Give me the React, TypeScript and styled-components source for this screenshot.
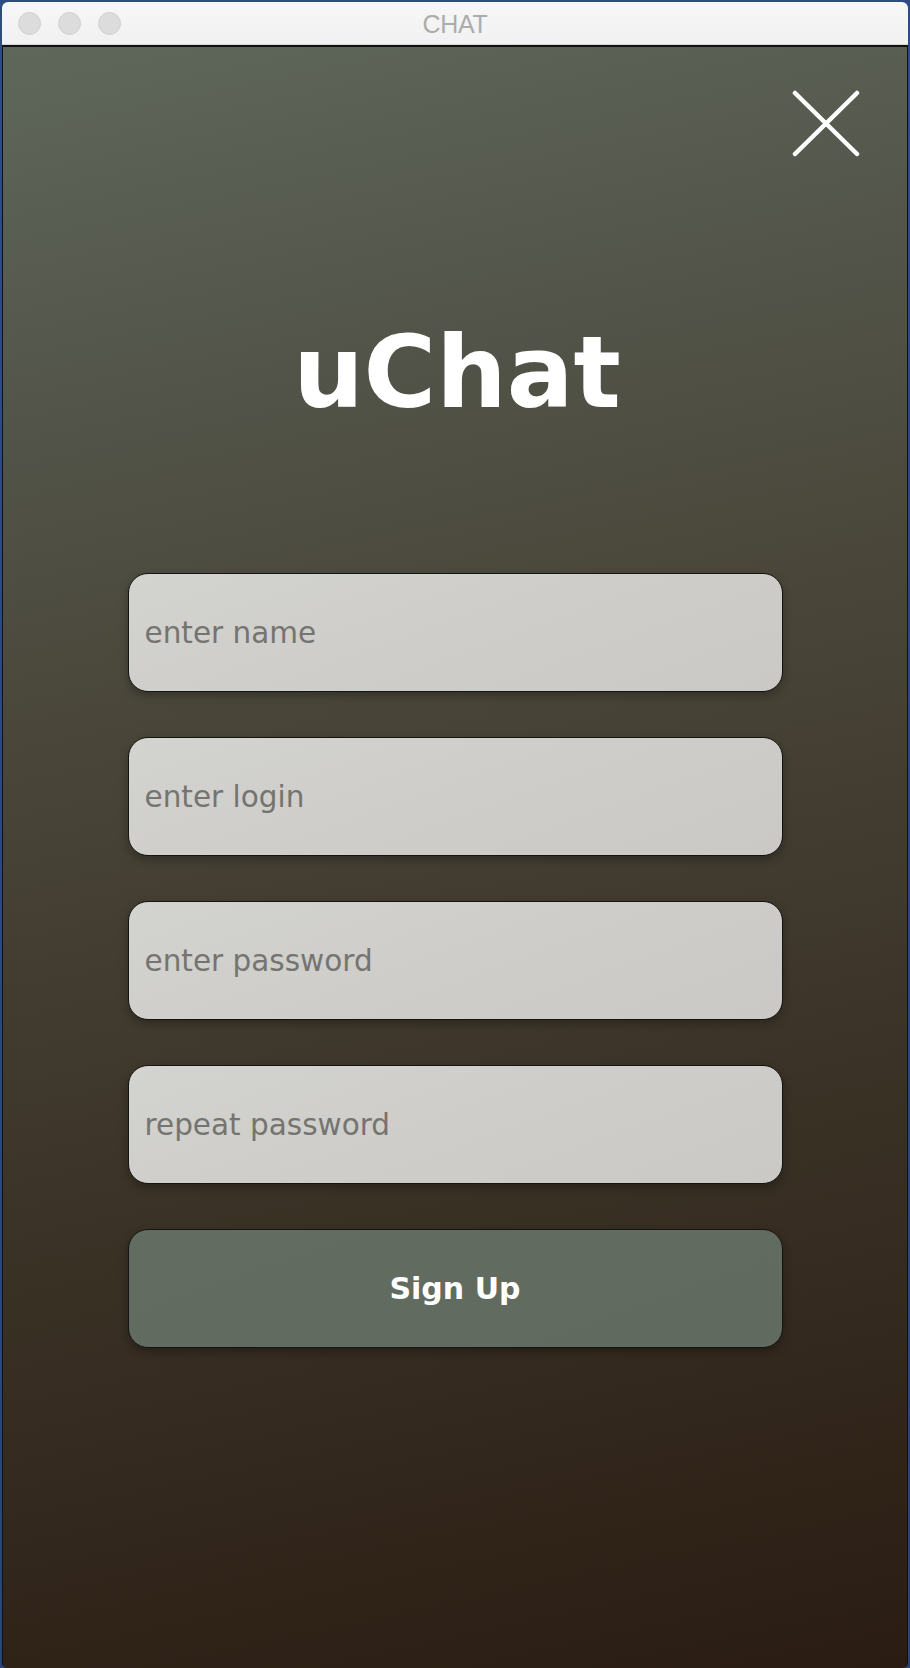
import React from "react";
import styled, { createGlobalStyle } from "styled-components";

const Global = createGlobalStyle`
  html, body {
    margin: 0;
    padding: 0;
    background: #2e4a82;
  }
  #root {
    width: 910px;
    height: 1668px;
  }
  * { box-sizing: border-box; }
`;

const Desktop = styled.div`
  width: 910px;
  height: 1668px;
  padding: 2px 2px 0 2px;
  background: linear-gradient(180deg, #2f4b84 0%, #2a4578 100%);
  display: flex;
`;

const Window = styled.div`
  flex: 1;
  display: flex;
  flex-direction: column;
  border-radius: 6px 6px 5px 5px;
  overflow: hidden;
`;

const TitleBar = styled.div`
  position: relative;
  height: 43px;
  flex: none;
  background: linear-gradient(180deg, #f7f7f7 0%, #f1f1f1 100%);
  border-bottom: 1px solid #d6d6d6;
  display: flex;
  align-items: center;
  justify-content: center;
  padding: 2px 16px 0 16px;
`;

const Lights = styled.div`
  position: absolute;
  left: 16px;
  top: 10px;
  display: flex;
  gap: 17px;
`;

const Light = styled.span`
  width: 23px;
  height: 23px;
  border-radius: 50%;
  background: #dcdcdc;
  border: 1px solid #d0d0d0;
`;

const WindowTitle = styled.div`
  font-family: "Liberation Sans", Arial, sans-serif;
  font-size: 25px;
  color: #acacac;
  letter-spacing: -0.3px;
  margin-left: 0;
`;

const Content = styled.div`
  flex: 1;
  display: flex;
  flex-direction: column;
  align-items: center;
  border-top: 2px solid #111;
  border-left: 1px solid #111;
  border-right: 1px solid #111;
  background: linear-gradient(
    168deg,
    #5f675b 0%,
    #53554a 20%,
    #4a473a 38%,
    #3d3529 62%,
    #33281d 82%,
    #2a1c12 100%
  );
`;

const Header = styled.div`
  align-self: stretch;
  display: flex;
  justify-content: flex-end;
  padding: 43px 47px 0 0;
`;

const CloseButton = styled.button`
  background: none;
  border: none;
  padding: 0;
  cursor: pointer;
  display: flex;
`;

const Title = styled.h1`
  margin: 166px 0 0 0;
  font-family: "DejaVu Sans", Verdana, sans-serif;
  font-weight: bold;
  font-size: 99px;
  line-height: 99px;
  color: #ffffff;
  padding-left: 4px;
`;

const Form = styled.form`
  margin-top: 151px;
  display: flex;
  flex-direction: column;
  gap: 45px;
  width: 655px;
`;

const Field = styled.input`
  height: 119px;
  width: 100%;
  border: 1.5px solid #141414;
  border-radius: 20px;
  background: linear-gradient(160deg, #d3d3cf 0%, #cecdca 50%, #cac9c5 100%);
  box-shadow: 0 4px 10px rgba(0, 0, 0, 0.28);
  padding: 0 16px;
  font-family: "DejaVu Sans", Verdana, sans-serif;
  font-size: 29.5px;
  color: #555;
  outline: none;
  &::placeholder {
    color: #747471;
  }
`;

const Submit = styled.button`
  height: 119px;
  width: 100%;
  border: 1.5px solid #141414;
  border-radius: 20px;
  background: linear-gradient(160deg, #636c60 0%, #616a5e 100%);
  box-shadow: 0 4px 10px rgba(0, 0, 0, 0.3);
  font-family: "DejaVu Sans", Verdana, sans-serif;
  font-weight: bold;
  font-size: 30px;
  color: #ffffff;
  cursor: pointer;
`;

const CloseIcon = () => (
  <svg width="68" height="67" viewBox="0 0 68 67">
    <path
      d="M3 3 L65 64 M65 3 L3 64"
      stroke="#ffffff"
      strokeWidth="4.5"
      strokeLinecap="round"
      fill="none"
    />
  </svg>
);

export default function App() {
  const fields = ["enter name", "enter login", "enter password", "repeat password"];
  return (
    <>
      <Global />
      <Desktop>
        <Window>
          <TitleBar>
            <Lights>
              <Light />
              <Light />
              <Light />
            </Lights>
            <WindowTitle>CHAT</WindowTitle>
          </TitleBar>
          <Content>
            <Header>
              <CloseButton aria-label="close">
                <CloseIcon />
              </CloseButton>
            </Header>
            <Title>uChat</Title>
            <Form onSubmit={(e) => e.preventDefault()}>
              {fields.map((f) => (
                <Field
                  key={f}
                  placeholder={f}
                  type={f.includes("password") ? "password" : "text"}
                />
              ))}
              <Submit type="submit">Sign Up</Submit>
            </Form>
          </Content>
        </Window>
      </Desktop>
    </>
  );
}
